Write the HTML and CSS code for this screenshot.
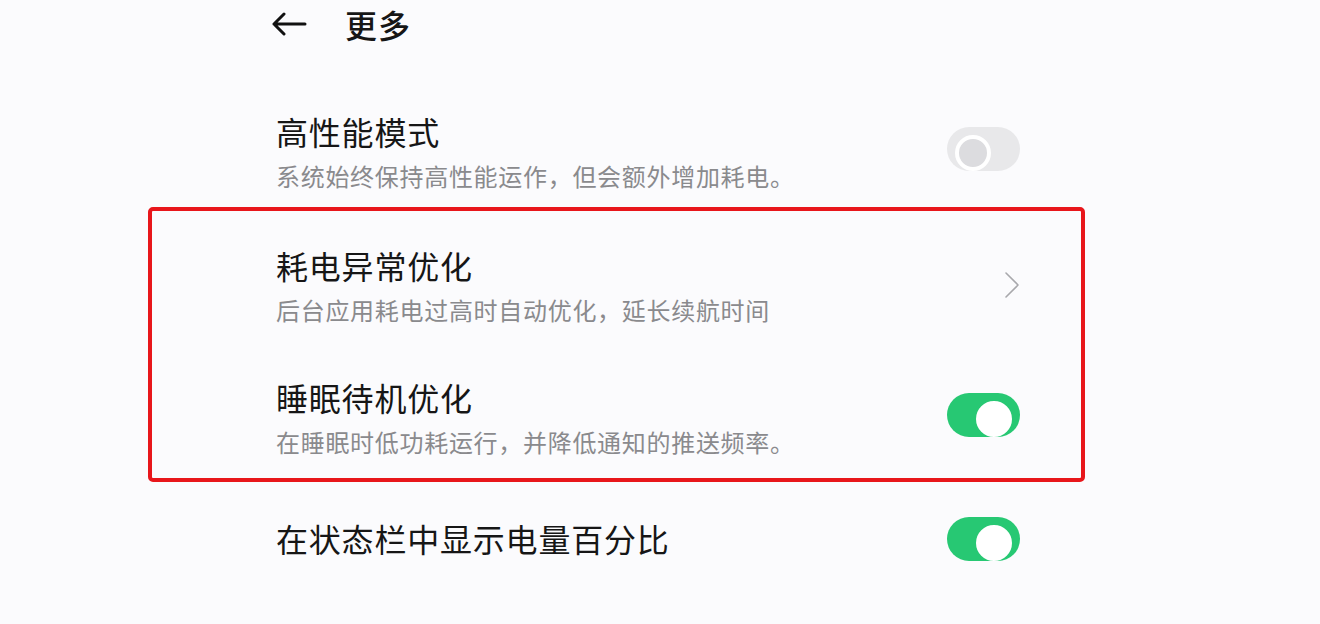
FILE: index.html
```html
<!DOCTYPE html>
<html lang="zh-CN">
<head>
<meta charset="utf-8">
<title>更多</title>
<link rel="stylesheet" href="styles.css">
</head>
<body>
<div class="screen">
  <header class="topbar">
    <svg class="back" width="36" height="24" viewBox="0 0 36 24" aria-hidden="true">
      <path d="M34 12H3M13 2L3 12l10 10" fill="none" stroke="#111" stroke-width="3" stroke-linecap="round" stroke-linejoin="round"/>
    </svg>
    <h1 class="page-title">更多</h1>
  </header>

  <div class="list">
    <div class="row row-first">
      <div class="text">
        <div class="title">高性能模式</div>
        <div class="desc">系统始终保持高性能运作，但会额外增加耗电。</div>
      </div>
      <span class="switch"></span>
    </div>

    <div class="group">
      <div class="row row-top">
        <div class="text">
          <div class="title">耗电异常优化</div>
          <div class="desc">后台应用耗电过高时自动优化，延长续航时间</div>
        </div>
        <svg class="chevron" width="16" height="28" viewBox="0 0 16 28" aria-hidden="true">
          <path d="M2 2l12 12L2 26" fill="none" stroke="#a8a8ac" stroke-width="1.6" stroke-linecap="round" stroke-linejoin="round"/>
        </svg>
      </div>
      <div class="row row-bottom">
        <div class="text">
          <div class="title">睡眠待机优化</div>
          <div class="desc">在睡眠时低功耗运行，并降低通知的推送频率。</div>
        </div>
        <span class="switch on"></span>
      </div>
    </div>

    <div class="row row-last">
      <div class="text">
        <div class="title">在状态栏中显示电量百分比</div>
      </div>
      <span class="switch on"></span>
    </div>
  </div>
</div>
</body>
</html>
```
FILE: styles.css
```css
* {
  box-sizing: border-box;
}

html,
body {
  margin: 0;
  background: #fbfbfd;
}

body {
  font-family: "Noto Sans CJK SC", "Noto Sans", sans-serif;
  color: #161616;
  width: 1320px;
  height: 624px;
  overflow: hidden;
}

.screen {
  padding-left: 148px;
}

.topbar {
  display: flex;
  align-items: center;
  height: 48px;
  padding-left: 123px;
}

.back {
  display: block;
  margin-right: 38px;
}

.page-title {
  margin: 0;
  font-size: 32px;
  font-weight: 500;
  line-height: 48px;
  letter-spacing: 1px;
}

.list {
  width: 937px;
  display: flex;
  flex-direction: column;
}

.row {
  display: flex;
  align-items: center;
  justify-content: space-between;
  padding-left: 128px;
  padding-right: 65px;
}

.text {
  display: flex;
  flex-direction: column;
  gap: 9px;
}

.title {
  font-size: 32px;
  line-height: 40px;
  letter-spacing: 0.8px;
}

.desc {
  font-size: 24px;
  line-height: 32px;
  color: #8a8a8d;
  letter-spacing: 0.7px;
}

.row-first {
  margin-top: 63px;
}

.group {
  margin-top: 15px;
  border: 4px solid #e8161b;
  border-radius: 5px;
  padding: 34px 0 20px;
  display: flex;
  flex-direction: column;
  gap: 51px;
}

.group .row {
  padding-left: 124px;
  padding-right: 61px;
}

.chevron {
  display: block;
  margin-bottom: 2px;
}

.row-last {
  margin-top: 33px;
}

.switch {
  position: relative;
  display: block;
  width: 73px;
  height: 44px;
  border-radius: 22px;
  background: #e8e8ea;
  flex: none;
  margin-bottom: 6px;
}

.row-last .switch {
  margin-bottom: 0;
  margin-top: 2px;
}

.switch::after {
  content: "";
  position: absolute;
  top: 8px;
  left: 8px;
  width: 28px;
  height: 28px;
  border-radius: 50%;
  background: #dcdcdf;
  border: 4px solid #ffffff;
}

.switch.on {
  background: #27c873;
}

.switch.on::after {
  left: auto;
  right: 8px;
  background: #ffffff;
}
```
